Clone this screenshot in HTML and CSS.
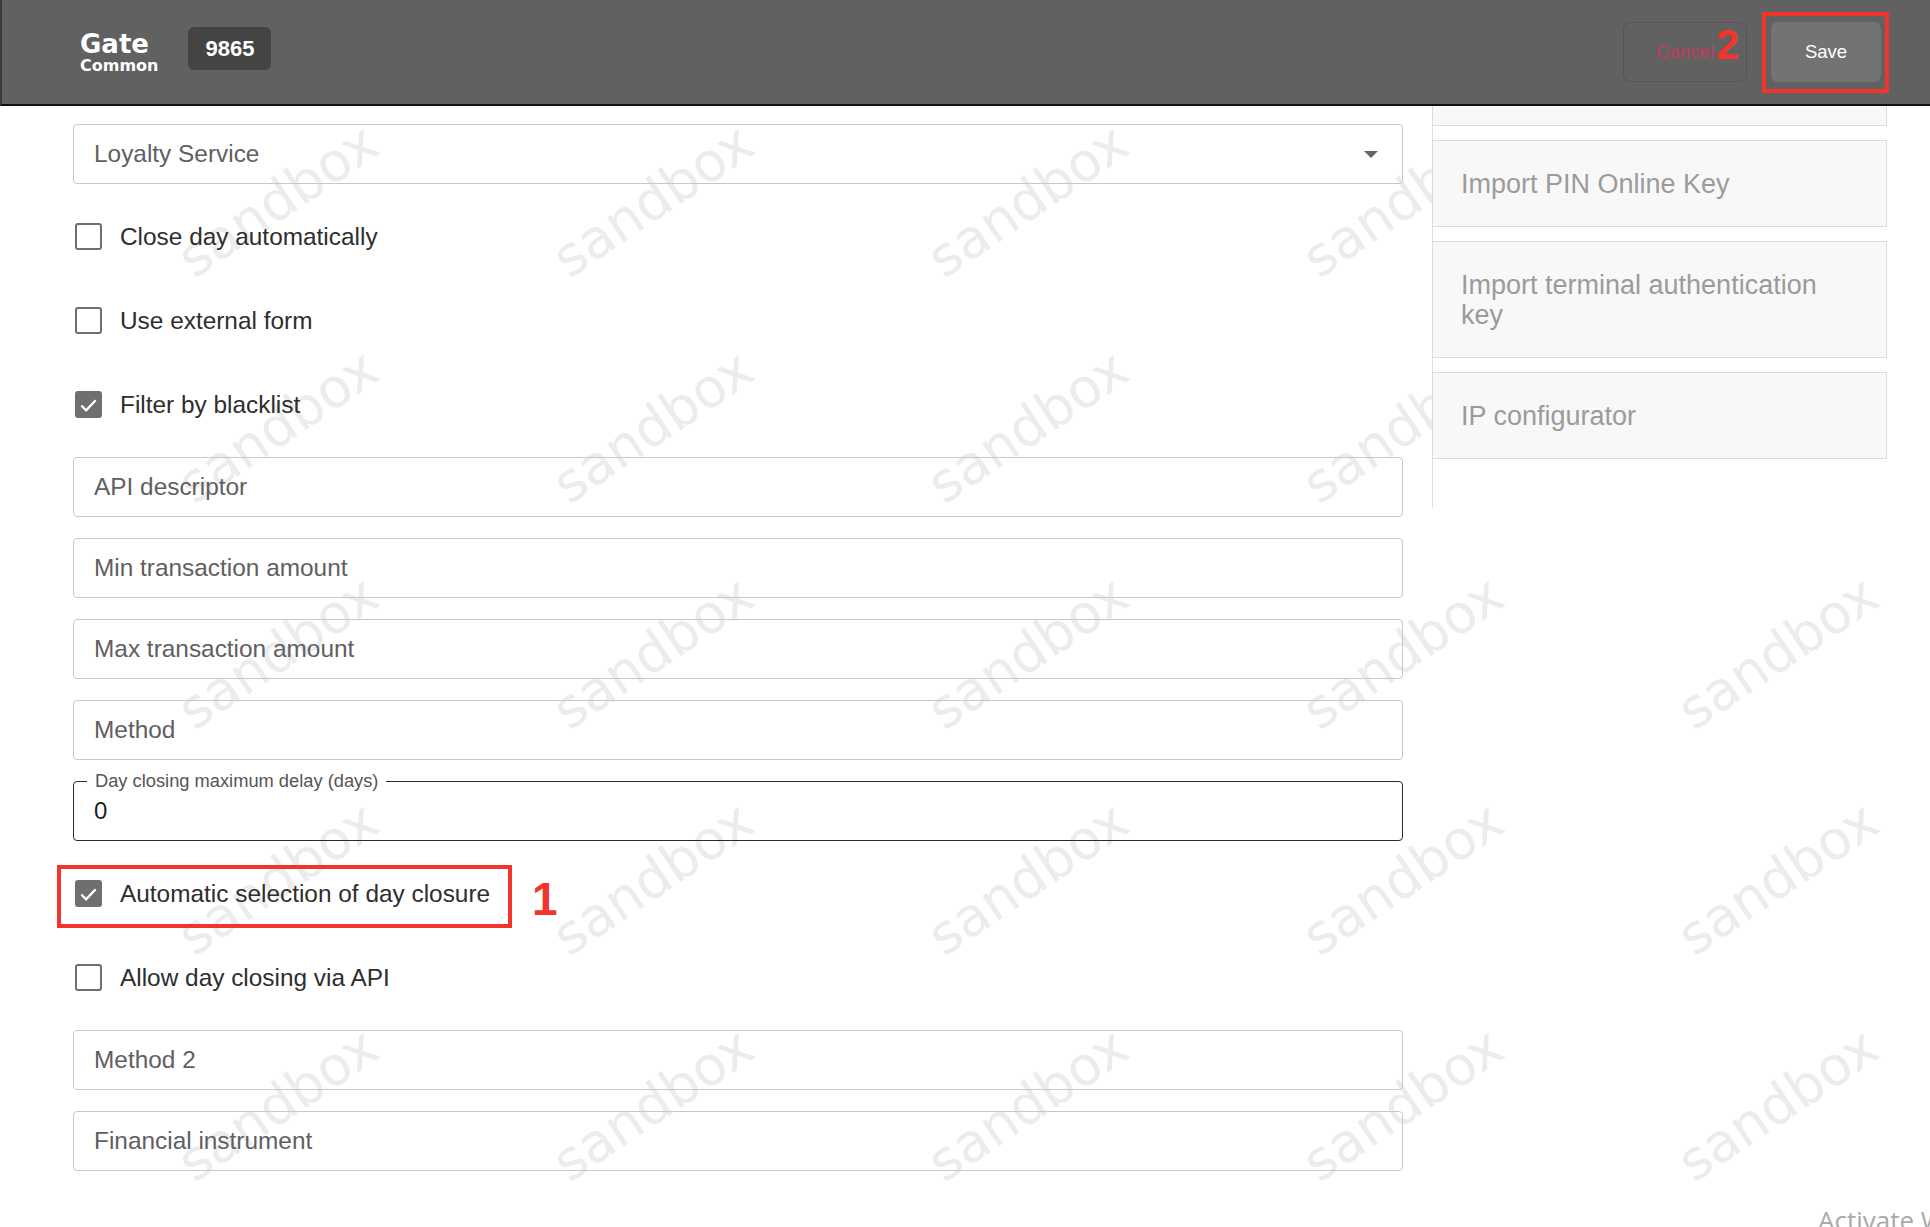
FILE: index.html
```html
<!DOCTYPE html>
<html lang="en">
<head>
<meta charset="utf-8">
<title>Gate Common</title>
<link rel="stylesheet" href="styles.css">
</head>
<body>
<div class="page">
  <div class="watermark" aria-hidden="true">
    <span>sandbox</span><span>sandbox</span><span>sandbox</span><span>sandbox</span><span>sandbox</span>
    <span>sandbox</span><span>sandbox</span><span>sandbox</span><span>sandbox</span><span>sandbox</span>
    <span>sandbox</span><span>sandbox</span><span>sandbox</span><span>sandbox</span><span>sandbox</span>
    <span>sandbox</span><span>sandbox</span><span>sandbox</span><span>sandbox</span><span>sandbox</span>
    <span>sandbox</span><span>sandbox</span><span>sandbox</span><span>sandbox</span><span>sandbox</span>
  </div>

  <header class="topbar">
    <div class="brand">
      <div class="brand-name">Gate</div>
      <div class="brand-sub">Common</div>
    </div>
    <div class="badge">9865</div>
    <div class="actions">
      <button class="btn btn-cancel">Cancel<span class="anno anno-2">2</span></button>
      <div class="save-wrap">
        <button class="btn btn-save">Save</button>
        <span class="anno-box anno-box-save"></span>
      </div>
    </div>
  </header>

  <main class="content">
    <section class="form">
      <div class="field field-select">
        <span>Loyalty Service</span>
        <span class="caret"></span>
      </div>

      <label class="check-row">
        <span class="box"></span>
        <span>Close day automatically</span>
      </label>
      <label class="check-row">
        <span class="box"></span>
        <span>Use external form</span>
      </label>
      <label class="check-row">
        <span class="box box-on"><svg viewBox="0 0 24 24" width="24" height="24"><polyline points="4.5,12.5 9.5,17.5 19.5,7" fill="none" stroke="#fff" stroke-width="2.4"/></svg></span>
        <span>Filter by blacklist</span>
      </label>

      <div class="field">API descriptor</div>
      <div class="field">Min transaction amount</div>
      <div class="field">Max transaction amount</div>
      <div class="field">Method</div>

      <fieldset class="outlined">
        <legend>Day closing maximum delay (days)</legend>
        <div class="value">0</div>
      </fieldset>

      <label class="check-row annotated">
        <span class="box box-on"><svg viewBox="0 0 24 24" width="24" height="24"><polyline points="4.5,12.5 9.5,17.5 19.5,7" fill="none" stroke="#fff" stroke-width="2.4"/></svg></span>
        <span>Automatic selection of day closure</span>
        <span class="anno-box anno-box-row"></span>
        <span class="anno anno-1">1</span>
      </label>
      <label class="check-row">
        <span class="box"></span>
        <span>Allow day closing via API</span>
      </label>

      <div class="field">Method 2</div>
      <div class="field">Financial instrument</div>
    </section>

    <aside class="side">
      <div class="card card-cut"></div>
      <div class="card">Import PIN Online Key</div>
      <div class="card">Import terminal authentication key</div>
      <div class="card">IP configurator</div>
    </aside>
  </main>

  <div class="os-activate">Activate Windows</div>
</div>
</body>
</html>
```
FILE: styles.css
```css
* { box-sizing: border-box; }

html, body {
  margin: 0;
  padding: 0;
  height: 100%;
  overflow: hidden;
  background: #ffffff;
}

body {
  font-family: "Liberation Sans", Arial, sans-serif;
}

.page {
  position: relative;
  width: 1930px;
  height: 1227px;
  overflow: hidden;
}

/* watermark layer */
.watermark {
  position: absolute;
  left: 90px;
  top: 87px;
  display: grid;
  grid-template-columns: repeat(5, 375px);
  grid-auto-rows: 226px;
  z-index: 0;
  pointer-events: none;
}
.watermark span {
  display: flex;
  align-items: center;
  justify-content: center;
  font-family: "DejaVu Sans", sans-serif;
  font-size: 54px;
  color: #ececec;
  transform: rotate(-34deg);
  white-space: nowrap;
}

/* header */
.topbar {
  position: relative;
  z-index: 3;
  height: 106px;
  background: #616161;
  border-bottom: 2px solid #111111;
  border-left: 2px solid #3a3a3a;
  display: flex;
  align-items: center;
  padding: 0 49px 0 78px;
  color: #ffffff;
}
.brand {
  align-self: flex-start;
  margin-top: 31px;
  font-family: "DejaVu Sans", Verdana, sans-serif;
  font-weight: bold;
}
.brand-name {
  font-size: 26px;
  line-height: 27px;
}
.brand-sub {
  font-size: 16px;
  line-height: 16px;
}
.badge {
  align-self: flex-start;
  margin-top: 27px;
  margin-left: 30px;
  width: 83px;
  height: 43px;
  border-radius: 6px;
  background: #444444;
  display: flex;
  align-items: center;
  justify-content: center;
  font-weight: bold;
  font-size: 22px;
}
.actions {
  margin-left: auto;
  display: flex;
  align-items: center;
  gap: 24px;
}
.btn {
  height: 60px;
  border-radius: 7px;
  font-family: "Liberation Sans", Arial, sans-serif;
  font-size: 18.5px;
  padding: 0;
  cursor: pointer;
}
.btn-cancel {
  position: relative;
  width: 124px;
  background: transparent;
  border: 1px solid #5e4e5e;
  color: #c23a5e;
}
.save-wrap {
  position: relative;
}
.btn-save {
  display: block;
  width: 110px;
  background: #737373;
  border: none;
  color: #ffffff;
}

/* annotations */
.anno {
  position: absolute;
  font-family: "Liberation Sans", Arial, sans-serif;
  font-weight: bold;
  color: #f2342b;
  pointer-events: none;
}
.anno-2 {
  left: 92px;
  top: 1px;
  font-size: 42px;
  line-height: 42px;
}
.anno-box {
  position: absolute;
  border: 4px solid #f2342b;
  pointer-events: none;
}
.anno-box-save {
  left: -9px;
  top: -10px;
  width: 127px;
  height: 81px;
}

/* content */
.content {
  position: relative;
  z-index: 1;
  display: flex;
  align-items: flex-start;
}
.form {
  margin-left: 73px;
  width: 1330px;
  padding-top: 18px;
  display: flex;
  flex-direction: column;
  gap: 21px;
}
.field {
  height: 60px;
  border: 1px solid #c8c8c8;
  border-radius: 4px;
  display: flex;
  align-items: center;
  padding: 0 24px 0 20px;
  font-size: 24.4px;
  color: #606060;
}
.field-select {
  justify-content: space-between;
}
.caret {
  width: 0;
  height: 0;
  border-left: 7.5px solid transparent;
  border-right: 7.5px solid transparent;
  border-top: 7px solid #666666;
}

.check-row {
  position: relative;
  height: 63px;
  display: flex;
  align-items: center;
  padding-left: 2px;
  font-size: 24.4px;
  color: #2e2e2e;
}
.box {
  flex-shrink: 0;
  width: 27px;
  height: 27px;
  margin-right: 18px;
  border: 2px solid #6f6f6f;
  border-radius: 3px;
  display: flex;
  align-items: center;
  justify-content: center;
}
.box-on {
  background: #6f6f6f;
}
.anno-box-row {
  left: -16px;
  top: 3px;
  width: 455px;
  height: 63px;
}
.anno-1 {
  left: 459px;
  top: 14px;
  font-size: 46px;
  line-height: 46px;
}

.outlined {
  margin: -9px 0 0;
  padding: 0 24px 0 13px;
  height: 69px;
  min-width: 0;
  border: 1px solid #2b2b2b;
  border-radius: 4px;
}
.outlined legend {
  padding: 0 8px;
  font-size: 18.3px;
  line-height: 18px;
  color: #555555;
}
.value {
  padding: 9px 0 0 7px;
  font-size: 24px;
  line-height: 24px;
  color: #1f1f1f;
}

/* right side panel */
.side {
  margin-left: 29px;
  width: 455px;
  height: 402px;
  background: #ffffff;
  border-left: 1px solid #dedede;
  display: flex;
  flex-direction: column;
  gap: 14px;
}
.card {
  width: 455px;
  margin-left: -1px;
  background: #f8f8f8;
  border: 1px solid #dcdcdc;
  padding: 27.5px 28px;
  font-size: 27px;
  line-height: 30px;
  color: #9b9b9b;
}
.card-cut {
  height: 20px;
  padding: 0;
  border-top: none;
}

/* OS overlay */
.os-activate {
  position: absolute;
  left: 1818px;
  top: 1205px;
  z-index: 5;
  font-family: "Open Sans", "Noto Sans", sans-serif;
  font-size: 26px;
  line-height: 30px;
  color: #a9a9a9;
  white-space: nowrap;
}
```
